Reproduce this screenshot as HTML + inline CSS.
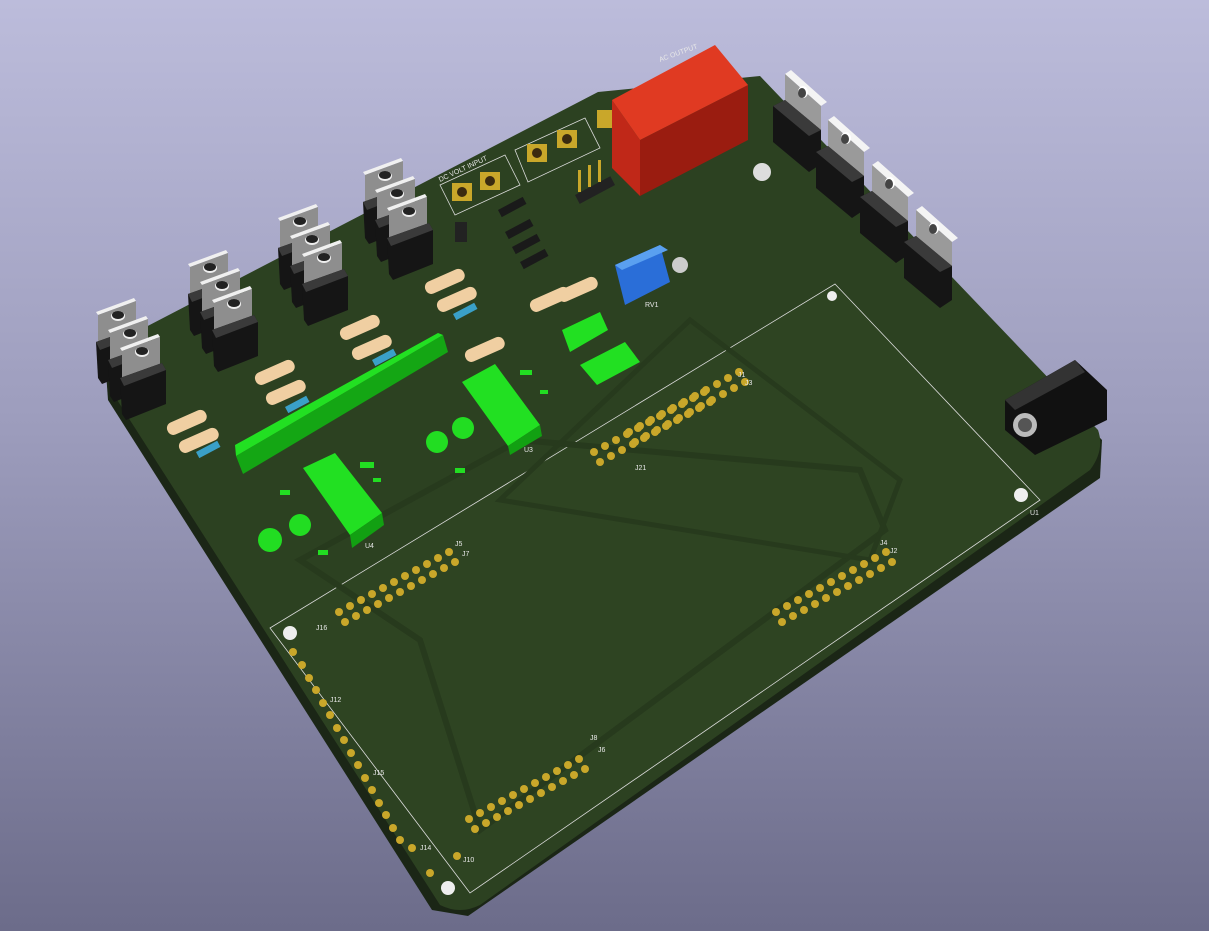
<!DOCTYPE html>
<html><head><meta charset="utf-8"><style>
html,body{margin:0;padding:0;width:1209px;height:931px;overflow:hidden}
body{background:linear-gradient(#bcbcdb 0%,#9d9dbd 45%,#6c6c8a 100%)}
svg{position:absolute;left:0;top:0}
text{font-family:"Liberation Sans",sans-serif;fill:#e8e8e8;font-size:7px}
</style></head><body>
<svg width="1209" height="931" viewBox="0 0 1209 931">
<defs>
<g id="to220">
 <polygon points="0,12 38,-2 40,1 2,15" fill="#f0f0f0"/>
 <polygon points="2,15 40,1 40,30 2,44" fill="#8e8e8e"/>
 <ellipse cx="22" cy="16" rx="7" ry="5" fill="#eee"/>
 <ellipse cx="22" cy="15" rx="6" ry="4" fill="#222"/>
 <polygon points="0,42 42,27 46,34 46,68 6,84 2,78" fill="#151515"/>
 <polygon points="0,42 42,27 46,34 4,50" fill="#3a3a3a"/>
</g>
<g id="to220r">
 <polygon points="0,0 6,-4 42,28 36,32" fill="#f4f4f4"/>
 <polygon points="0,0 36,32 36,60 0,30" fill="#9a9a9a"/>
 <ellipse cx="18" cy="18" rx="5" ry="6" fill="#fff"/>
 <ellipse cx="17" cy="19" rx="4" ry="5" fill="#444"/>
 <polygon points="-12,32 0,26 36,56 36,90 24,98 -12,68" fill="#151515"/>
 <polygon points="-12,32 0,26 36,56 24,62" fill="#3a3a3a"/>
</g>
<g id="res">
 <rect x="0" y="0" width="42" height="13" rx="6" fill="#f0cfa2" transform="rotate(-24)"/>
</g>
</defs>
<polygon points="106,372 600,100 762,82 1102,440 1100,478 468,916 432,910 108,400" fill="#1b2616"/>
<path d="M108,370 Q110,345 140,330 L598,92 L760,76 L1098,430 Q1105,450 1090,470 L480,905 Q460,915 440,905 L112,392 Z" fill="#2c4121"/>
<polygon points="270,628 835,284 1040,500 470,893" fill="#2e4422" stroke="#dcdcdc" stroke-width="0.8"/>
<polygon points="300,560 520,440 860,470 885,530 480,830 420,640" fill="none" stroke="#273a1d" stroke-width="6"/>
<polygon points="500,500 690,320 900,480 870,560" fill="none" stroke="#273a1d" stroke-width="5"/>
<polygon points="440,185 505,155 520,185 455,215" fill="none" stroke="#ddd" stroke-width="0.8"/>
<polygon points="515,150 585,118 600,148 528,182" fill="none" stroke="#ddd" stroke-width="0.8"/>
<text x="440" y="182" transform="rotate(-25 440 182)">DC VOLT INPUT</text>
<text x="660" y="62" transform="rotate(-20 660 62)">AC OUTPUT</text>
<g fill="#c9a72a"><rect x="452" y="183" width="20" height="18"/><rect x="480" y="172" width="20" height="18"/><rect x="527" y="144" width="20" height="18"/><rect x="557" y="130" width="20" height="18"/><rect x="597" y="110" width="16" height="18"/></g>
<g fill="#3a2a10"><circle cx="462" cy="192" r="5"/><circle cx="490" cy="181" r="5"/><circle cx="537" cy="153" r="5"/><circle cx="567" cy="139" r="5"/></g>
<use href="#to220" x="96" y="300"/><use href="#to220" x="108" y="318"/><use href="#to220" x="120" y="336"/>
<use href="#to220" x="188" y="252"/><use href="#to220" x="200" y="270"/><use href="#to220" x="212" y="288"/>
<use href="#to220" x="278" y="206"/><use href="#to220" x="290" y="224"/><use href="#to220" x="302" y="242"/>
<use href="#to220" x="363" y="160"/><use href="#to220" x="375" y="178"/><use href="#to220" x="387" y="196"/>
<use href="#to220r" x="785" y="74"/><use href="#to220r" x="828" y="120"/><use href="#to220r" x="872" y="165"/><use href="#to220r" x="916" y="210"/>
<polygon points="640,140 748,85 748,140 640,196" fill="#9a1c10"/>
<polygon points="612,100 640,140 640,196 612,168" fill="#c02818"/>
<polygon points="612,100 715,45 748,85 640,140" fill="#e03a22"/>
<circle cx="762" cy="172" r="9" fill="#ddd"/>
<g>
<use href="#res" x="165" y="425"/><use href="#res" x="177" y="443"/>
<use href="#res" x="253" y="375"/><use href="#res" x="264" y="395"/>
<use href="#res" x="338" y="330"/><use href="#res" x="350" y="350"/>
<use href="#res" x="423" y="284"/><use href="#res" x="435" y="302"/>
<use href="#res" x="463" y="352"/>
<use href="#res" x="528" y="302"/><use href="#res" x="556" y="292"/>
</g>
<g fill="#1a1a1a"><rect x="498" y="210" width="28" height="8" transform="rotate(-28 498 210)"/><rect x="505" y="232" width="28" height="8" transform="rotate(-28 505 232)"/><rect x="512" y="247" width="28" height="8" transform="rotate(-28 512 247)"/><rect x="520" y="262" width="28" height="8" transform="rotate(-28 520 262)"/></g>
<g fill="#3aa0c8"><rect x="196" y="452" width="24" height="7" transform="rotate(-28 196 452)"/><rect x="285" y="407" width="24" height="7" transform="rotate(-28 285 407)"/><rect x="372" y="360" width="24" height="7" transform="rotate(-28 372 360)"/><rect x="453" y="314" width="24" height="7" transform="rotate(-28 453 314)"/></g>
<polygon points="443,335 448,352 243,474 236,456" fill="#14a614"/>
<polygon points="235,445 438,333 443,335 236,456" fill="#22e022"/>
<polygon points="303,468 335,453 382,513 350,535" fill="#22e022"/>
<polygon points="350,535 382,513 384,525 352,548" fill="#12a012"/>
<polygon points="462,382 495,364 540,425 508,446" fill="#22e022"/>
<polygon points="508,446 540,425 542,436 510,455" fill="#12a012"/>
<polygon points="580,365 625,342 640,362 597,385" fill="#22e022"/>
<polygon points="562,330 600,312 608,330 570,352" fill="#22e022"/>
<g fill="#22dd22"><circle cx="270" cy="540" r="12"/><circle cx="300" cy="525" r="11"/><circle cx="437" cy="442" r="11"/><circle cx="463" cy="428" r="11"/></g>
<polygon points="615,265 660,245 670,282 625,305" fill="#2a6ed8"/>
<polygon points="615,265 660,245 668,250 622,270" fill="#5aa0f0"/>
<circle cx="680" cy="265" r="8" fill="#ccc"/>
<g fill="#22dd22"><rect x="360" y="462" width="14" height="6"/><rect x="520" y="370" width="12" height="5"/><rect x="455" y="468" width="10" height="5"/><rect x="280" y="490" width="10" height="5"/><rect x="318" y="550" width="10" height="5"/><rect x="373" y="478" width="8" height="4"/><rect x="540" y="390" width="8" height="4"/></g>
<g fill="#c9a72a">
<g id="h1"><circle cx="345" cy="622" r="4"/><circle cx="356" cy="616" r="4"/><circle cx="367" cy="610" r="4"/><circle cx="378" cy="604" r="4"/><circle cx="389" cy="598" r="4"/><circle cx="400" cy="592" r="4"/><circle cx="411" cy="586" r="4"/><circle cx="422" cy="580" r="4"/><circle cx="433" cy="574" r="4"/><circle cx="444" cy="568" r="4"/><circle cx="455" cy="562" r="4"/></g>
<use href="#h1" x="-6" y="-10"/>
<use href="#h1" x="437" y="0"/><use href="#h1" x="431" y="-10"/>
<use href="#h1" x="130" y="207"/><use href="#h1" x="124" y="197"/>
<use href="#h1" x="255" y="-160"/><use href="#h1" x="249" y="-170"/><use href="#h1" x="290" y="-180"/><use href="#h1" x="284" y="-190"/>
<circle cx="293" cy="652" r="4"/><circle cx="302" cy="665" r="4"/><circle cx="309" cy="678" r="4"/><circle cx="316" cy="690" r="4"/><circle cx="323" cy="703" r="4"/><circle cx="330" cy="715" r="4"/><circle cx="337" cy="728" r="4"/><circle cx="344" cy="740" r="4"/><circle cx="351" cy="753" r="4"/><circle cx="358" cy="765" r="4"/><circle cx="365" cy="778" r="4"/><circle cx="372" cy="790" r="4"/><circle cx="379" cy="803" r="4"/><circle cx="386" cy="815" r="4"/><circle cx="393" cy="828" r="4"/><circle cx="400" cy="840" r="4"/><circle cx="412" cy="848" r="4"/><circle cx="430" cy="873" r="4"/><circle cx="457" cy="856" r="4"/>
</g>
<g fill="#eee"><circle cx="290" cy="633" r="7"/><circle cx="1021" cy="495" r="7"/><circle cx="448" cy="888" r="7"/><circle cx="832" cy="296" r="5"/></g>
<g fill="#222"><rect x="575" y="195" width="40" height="10" transform="rotate(-28 575 195)"/><rect x="455" y="222" width="12" height="20"/></g>
<g fill="#c9a72a"><rect x="578" y="170" width="3" height="22"/><rect x="588" y="165" width="3" height="22"/><rect x="598" y="160" width="3" height="22"/></g>
<polygon points="1005,400 1075,360 1107,390 1107,420 1035,455 1005,430" fill="#111"/>
<polygon points="1005,400 1075,360 1085,372 1015,410" fill="#333"/>
<circle cx="1025" cy="425" r="12" fill="#bbb"/>
<circle cx="1025" cy="425" r="7" fill="#555"/>
<text x="738" y="377">J1</text><text x="745" y="385">J3</text><text x="635" y="470">J21</text>
<text x="880" y="545">J4</text><text x="890" y="553">J2</text><text x="590" y="740">J8</text><text x="598" y="752">J6</text>
<text x="455" y="546">J5</text><text x="462" y="556">J7</text><text x="316" y="630">J16</text><text x="330" y="702">J12</text>
<text x="373" y="775">J15</text><text x="420" y="850">J14</text><text x="463" y="862">J10</text><text x="1030" y="515">U1</text>
<text x="365" y="548">U4</text><text x="524" y="452">U3</text><text x="645" y="307">RV1</text>
</svg>
</body></html>
